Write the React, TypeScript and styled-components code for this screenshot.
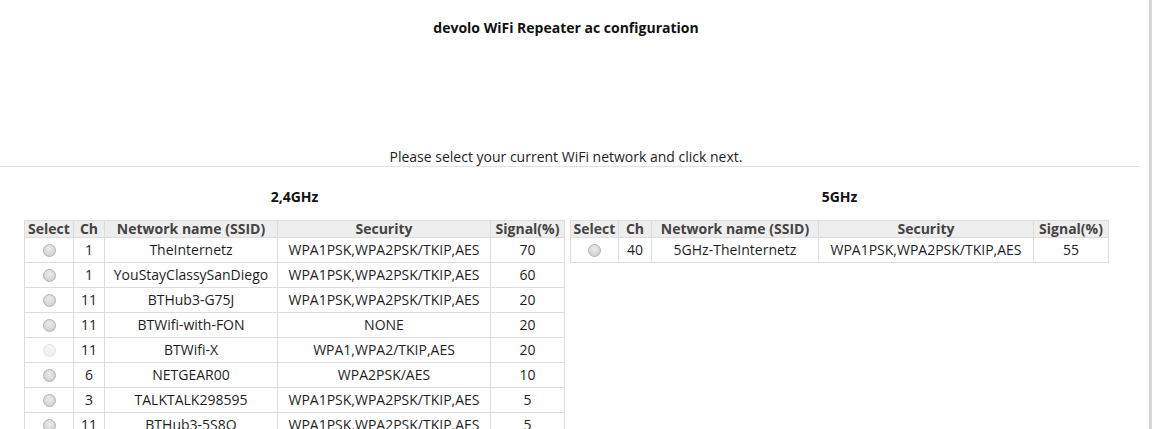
import React from 'react';
import styled, { createGlobalStyle } from 'styled-components';

const GlobalStyle = createGlobalStyle`
  html, body {
    margin: 0;
    padding: 0;
    background: #ffffff;
  }
  body {
    font-family: 'Open Sans', 'Liberation Sans', sans-serif;
    font-size: 14px;
    color: #1e1e1e;
  }
`;

const Frame = styled.div`
  width: 1149px;
  min-height: 429px;
  border-right: 3px solid #d6d6d6;
  display: flex;
`;

const Content = styled.div`
  width: 1141px;
  padding-top: 19px;
`;

const Title = styled.h1`
  width: 1132px;
  margin: 0;
  font-size: 14px;
  line-height: 18px;
  font-weight: 700;
  text-align: center;
  color: #111;
`;

const Intro = styled.div`
  margin-top: 111px;
  border-bottom: 1px solid #e2e2e2;
`;

const IntroText = styled.p`
  width: 1132px;
  margin: 0;
  line-height: 18px;
  text-align: center;
`;

const Columns = styled.div`
  display: flex;
  gap: 5px;
  padding-left: 24px;
  margin-top: 21px;
  align-items: flex-start;
`;

const Band = styled.section`
  display: flex;
  flex-direction: column;
  align-items: center;
`;

const BandTitle = styled.h2`
  margin: 0 0 14px;
  font-size: 14px;
  line-height: 18px;
  font-weight: 700;
  color: #111;
`;

const Table = styled.table`
  border-collapse: collapse;
  table-layout: fixed;
`;

const Th = styled.th`
  background: #eeeeee;
  color: #444;
  font-weight: 700;
  line-height: 16px;
  padding: 0;
  border: 1px solid #dddddd;
  text-align: center;
  white-space: nowrap;
`;

const Td = styled.td`
  line-height: 24px;
  padding: 0;
  border: 1px solid #dddddd;
  text-align: center;
  white-space: nowrap;
`;

const Radio = styled.span<{ $disabled?: boolean }>`
  display: inline-block;
  width: 11px;
  height: 11px;
  border-radius: 50%;
  vertical-align: middle;
  margin-top: -2px;
  border: 1px solid ${p => (p.$disabled ? '#e2e2e2' : '#b4b4b4')};
  background: ${p =>
    p.$disabled
      ? 'linear-gradient(#f6f6f6, #eeeeee)'
      : 'radial-gradient(circle at 50% 35%, #ececec 0%, #d8d8d8 60%, #cacaca 100%)'};
`;

type Net = { ch: number; ssid: string; sec: string; signal: number; disabled?: boolean };

const band24: Net[] = [
  { ch: 1, ssid: 'TheInternetz', sec: 'WPA1PSK,WPA2PSK/TKIP,AES', signal: 70 },
  { ch: 1, ssid: 'YouStayClassySanDiego', sec: 'WPA1PSK,WPA2PSK/TKIP,AES', signal: 60 },
  { ch: 11, ssid: 'BTHub3-G75J', sec: 'WPA1PSK,WPA2PSK/TKIP,AES', signal: 20 },
  { ch: 11, ssid: 'BTWifi-with-FON', sec: 'NONE', signal: 20 },
  { ch: 11, ssid: 'BTWifi-X', sec: 'WPA1,WPA2/TKIP,AES', signal: 20, disabled: true },
  { ch: 6, ssid: 'NETGEAR00', sec: 'WPA2PSK/AES', signal: 10 },
  { ch: 3, ssid: 'TALKTALK298595', sec: 'WPA1PSK,WPA2PSK/TKIP,AES', signal: 5 },
  { ch: 11, ssid: 'BTHub3-5S8Q', sec: 'WPA1PSK,WPA2PSK/TKIP,AES', signal: 5 },
];

const band5: Net[] = [
  { ch: 40, ssid: '5GHz-TheInternetz', sec: 'WPA1PSK,WPA2PSK/TKIP,AES', signal: 55 },
];

const NetTable: React.FC<{ rows: Net[]; widths: number[] }> = ({ rows, widths }) => (
  <Table>
    <colgroup>
      {widths.map((w, i) => (
        <col key={i} style={{ width: w }} />
      ))}
    </colgroup>
    <thead>
      <tr>
        <Th>Select</Th>
        <Th>Ch</Th>
        <Th>Network name (SSID)</Th>
        <Th>Security</Th>
        <Th>Signal(%)</Th>
      </tr>
    </thead>
    <tbody>
      {rows.map(r => (
        <tr key={r.ssid}>
          <Td>
            <Radio $disabled={r.disabled} />
          </Td>
          <Td>{r.ch}</Td>
          <Td>{r.ssid}</Td>
          <Td>{r.sec}</Td>
          <Td>{r.signal}</Td>
        </tr>
      ))}
    </tbody>
  </Table>
);

const App: React.FC = () => (
  <Frame>
    <GlobalStyle />
    <Content>
      <Title>devolo WiFi Repeater ac configuration</Title>
      <Intro>
        <IntroText>Please select your current WiFi network and click next.</IntroText>
      </Intro>
      <Columns>
        <Band>
          <BandTitle>2,4GHz</BandTitle>
          <NetTable rows={band24} widths={[49, 31, 173, 213, 74]} />
        </Band>
        <Band>
          <BandTitle>5GHz</BandTitle>
          <NetTable rows={band5} widths={[48, 33, 167, 215, 75]} />
        </Band>
      </Columns>
    </Content>
  </Frame>
);

export default App;
